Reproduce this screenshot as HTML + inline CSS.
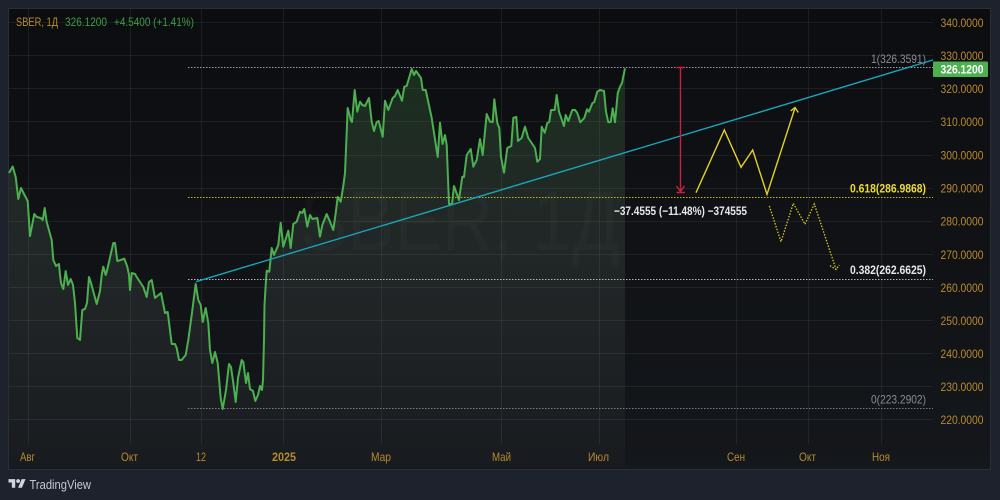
<!DOCTYPE html>
<html lang="ru"><head><meta charset="utf-8"><title>SBER</title>
<style>
html,body{margin:0;padding:0;background:#1e222d;width:1000px;height:500px;overflow:hidden}
svg{display:block;filter:blur(.3px)}
text{font-family:"Liberation Sans",sans-serif}
</style></head><body>
<svg width="1000" height="500" viewBox="0 0 1000 500" xmlns="http://www.w3.org/2000/svg">
<defs>
<linearGradient id="bg" x1="0" y1="0" x2="0" y2="1"><stop offset="0" stop-color="#0c0d10"/><stop offset="1" stop-color="#14171b"/></linearGradient>
<linearGradient id="fill" gradientUnits="userSpaceOnUse" x1="0" y1="68" x2="0" y2="468"><stop offset="0" stop-color="#4caf50" stop-opacity=".2"/><stop offset=".45" stop-color="#a8c8aa" stop-opacity=".11"/><stop offset="1" stop-color="#ffffff" stop-opacity=".015"/></linearGradient>
</defs>
<rect width="1000" height="500" fill="#1e222d"/>
<rect x="8.500" y="8.500" width="982" height="461" fill="url(#bg)" stroke="#2a2e39"/>
<text x="300" y="250" font-size="84" fill="#fff" fill-opacity=".025" textLength="320" lengthAdjust="spacingAndGlyphs">SBER, 1Д</text>
<g stroke="#fff" stroke-opacity=".065" stroke-width="1" fill="none">
<path d="M9 22.500H933M9 55.500H933M9 88.500H933M9 121.500H933M9 155.500H933M9 188.500H933M9 221.500H933M9 254.500H933M9 287.500H933M9 320.500H933M9 353.500H933M9 386.500H933M9 419.500H933"/>
<path d="M28.500 9V444M130.500 9V444M201.500 9V444M283.500 9V444M381.500 9V444M501.500 9V444M599.500 9V444M736.500 9V444M808.500 9V444M881.500 9V444"/>
</g>
<path fill="url(#fill)" d="M9 173L12.7 166.500L15.7 177L18.3 199L21 188L24 194L27.7 201L30 236L34.3 214L36.7 217L40.7 218L42.7 220L44.7 208L46.7 222L50 234L51.7 240L53.3 260L56 266L59 264L60 275L61 283L63.3 289L65.7 271L68 285L70.7 279L73 285L75 303L77.3 338L80 340L82.3 310L85 309L87 303L89 277L91 283L96.7 304L100 291L101.7 275L103.3 266.7L105.7 275L106.7 272L113.3 243L115 243L117.3 261L120.7 260L124.3 258.7L127.3 266.7L129 275L130 290L131.7 273L135 274L136.7 277L143.3 287L146.7 297L149 282L151.7 280L155 298L161 293L165 313L167.7 312L171.7 344L175 344L176.7 348L179 360L181.7 360L185.7 355L188.3 340L191.7 315L195.7 284L198.3 300L200.7 305L202.7 322L205.7 308L208.3 323L210 350L212.3 363L215 352L217.7 363L220.7 398L222.7 409L226 390L229 364L231 367L233.3 383L235.7 402L238 378L241.7 360L243.3 362L246 383L248 373L250 389L253 391L255.3 401L258 395L260 386L262 390L263 380L264 340L264.500 305L266 280L266.7 270.7L269.3 271.7L271.7 248L274 255L278.3 245L280.7 222.7L283.3 246.7L288.3 230.7L290.7 248L293.3 224L296.7 221.7L300 211.7L302.3 213L304.3 209L307.3 226.7L310 215L312.3 219L317.3 218L320 236.7L322.3 225L326.7 214L330 221.7L333.3 230L335.7 213L337.7 197L340.7 201.7L343.3 186L345 173L347.7 108L351 120.7L352 122L354.7 90L357.3 111.7L360 101.7L362.3 105L365 106L369 98L371.7 121.7L374 131L376.7 122L378.7 121L382.7 136.7L385 100.7L388.3 110L392.7 98L395 96L397.7 90L402 100.7L404.3 86.7L406.7 86L411.7 69L414 75L416 71L421 78L422.7 90L425.7 90L431.7 118L437.7 157L440 122.7L442.500 144L445 135L446.7 145L449 204L452 204L454 186L459 200L462.3 176.7L464 177L466.7 155L470.7 149L473.3 166.7L476.7 160L480 139L482.7 155L486.7 114L490 121.7L492.7 122L494.3 99.3L497.3 123L499.3 128L501 156.7L504 172.7L507.3 148L511.3 146L513.3 118L516.3 117L518 141L521.7 138L525 126.7L528.3 138L535 148L537.3 161.7L540 159L541.7 126.7L544.7 132.7L547.3 123L549.3 122L551 110L554.7 110L556.7 95L559 111.7L564 126L565.7 115L568.3 121L572.3 110L575 110L577.3 113L580.3 122.3L584.3 118L587 109.3L589 111.7L592.3 103.3L594.3 102L597.3 91.7L600 90L604 91L606 111.7L608.3 122.3L610.7 122L612.7 108.3L615 122.3L617.7 93.3L620 86.7L622 83L625 68.3V468H9Z"/>
<path fill="none" stroke="#4caf50" stroke-width="2" stroke-linejoin="round" d="M9 173L12.7 166.500L15.7 177L18.3 199L21 188L24 194L27.7 201L30 236L34.3 214L36.7 217L40.7 218L42.7 220L44.7 208L46.7 222L50 234L51.7 240L53.3 260L56 266L59 264L60 275L61 283L63.3 289L65.7 271L68 285L70.7 279L73 285L75 303L77.3 338L80 340L82.3 310L85 309L87 303L89 277L91 283L96.7 304L100 291L101.7 275L103.3 266.7L105.7 275L106.7 272L113.3 243L115 243L117.3 261L120.7 260L124.3 258.7L127.3 266.7L129 275L130 290L131.7 273L135 274L136.7 277L143.3 287L146.7 297L149 282L151.7 280L155 298L161 293L165 313L167.7 312L171.7 344L175 344L176.7 348L179 360L181.7 360L185.7 355L188.3 340L191.7 315L195.7 284L198.3 300L200.7 305L202.7 322L205.7 308L208.3 323L210 350L212.3 363L215 352L217.7 363L220.7 398L222.7 409L226 390L229 364L231 367L233.3 383L235.7 402L238 378L241.7 360L243.3 362L246 383L248 373L250 389L253 391L255.3 401L258 395L260 386L262 390L263 380L264 340L264.500 305L266 280L266.7 270.7L269.3 271.7L271.7 248L274 255L278.3 245L280.7 222.7L283.3 246.7L288.3 230.7L290.7 248L293.3 224L296.7 221.7L300 211.7L302.3 213L304.3 209L307.3 226.7L310 215L312.3 219L317.3 218L320 236.7L322.3 225L326.7 214L330 221.7L333.3 230L335.7 213L337.7 197L340.7 201.7L343.3 186L345 173L347.7 108L351 120.7L352 122L354.7 90L357.3 111.7L360 101.7L362.3 105L365 106L369 98L371.7 121.7L374 131L376.7 122L378.7 121L382.7 136.7L385 100.7L388.3 110L392.7 98L395 96L397.7 90L402 100.7L404.3 86.7L406.7 86L411.7 69L414 75L416 71L421 78L422.7 90L425.7 90L431.7 118L437.7 157L440 122.7L442.500 144L445 135L446.7 145L449 204L452 204L454 186L459 200L462.3 176.7L464 177L466.7 155L470.7 149L473.3 166.7L476.7 160L480 139L482.7 155L486.7 114L490 121.7L492.7 122L494.3 99.3L497.3 123L499.3 128L501 156.7L504 172.7L507.3 148L511.3 146L513.3 118L516.3 117L518 141L521.7 138L525 126.7L528.3 138L535 148L537.3 161.7L540 159L541.7 126.7L544.7 132.7L547.3 123L549.3 122L551 110L554.7 110L556.7 95L559 111.7L564 126L565.7 115L568.3 121L572.3 110L575 110L577.3 113L580.3 122.3L584.3 118L587 109.3L589 111.7L592.3 103.3L594.3 102L597.3 91.7L600 90L604 91L606 111.7L608.3 122.3L610.7 122L612.7 108.3L615 122.3L617.7 93.3L620 86.7L622 83L625 68.3"/>
<g fill="none" stroke-width="1" stroke-dasharray="1.500 1.500">
<path d="M188 67.500H933" stroke="#9a9da6"/>
<path d="M188 197.500H933" stroke="#c4b22a"/>
<path d="M188 279.500H933" stroke="#b2b5be"/>
<path d="M188 408.500H933" stroke="#787b84"/>
</g>
<path d="M196 281.700L933 60" fill="none" stroke="#1ba3b8" stroke-width="1.400"/>
<path d="M680.500 68V192M676.500 67.500H685M676.500 192.500H685M676.500 186L680.500 191.500L684.500 186" fill="none" stroke="#c9203f" stroke-width="1.400"/>
<path d="M696 192.700L724.300 130L741 167.300L752.700 150L767 194.300L795 108M790.700 111L795 107.500L798.300 112.500" fill="none" stroke="#e3cf2c" stroke-width="1.400"/>
<path d="M769.300 206L781 241.700L793.300 203.300L805 224.300L814.300 204L836 269.300M830 265.700L836 269.500L839.300 265" fill="none" stroke="#d8c42c" stroke-width="1.300" stroke-dasharray="1.500 1.500"/>
<g font-size="12" text-anchor="end">
<text x="926" y="63" fill="#8a8d96" textLength="55" lengthAdjust="spacingAndGlyphs">1(326.3591)</text>
<text x="926" y="192.500" fill="#f0dc30" font-weight="700" textLength="76" lengthAdjust="spacingAndGlyphs">0.618(286.9868)</text>
<text x="926" y="274" fill="#e6e7ea" font-weight="700" textLength="76" lengthAdjust="spacingAndGlyphs">0.382(262.6625)</text>
<text x="926" y="403.500" fill="#8a8d96" textLength="55" lengthAdjust="spacingAndGlyphs">0(223.2902)</text>
</g>
<text x="614" y="215" font-size="12" font-weight="700" fill="#e6e7ea" textLength="133" lengthAdjust="spacingAndGlyphs">−37.4555 (−11.48%) −374555</text>
<g font-size="12" fill="#b98a2e">
<text x="16" y="26" textLength="42" lengthAdjust="spacingAndGlyphs">SBER, 1Д</text>
<text x="65" y="26" fill="#3f9c46" textLength="42" lengthAdjust="spacingAndGlyphs">326.1200</text>
<text x="114" y="26" fill="#3f9c46" textLength="80" lengthAdjust="spacingAndGlyphs">+4.5400 (+1.41%)</text>
<text x="940.500" y="27" textLength="43" lengthAdjust="spacingAndGlyphs">340.0000</text>
<text x="940.500" y="60" textLength="43" lengthAdjust="spacingAndGlyphs">330.0000</text>
<text x="940.500" y="93" textLength="43" lengthAdjust="spacingAndGlyphs">320.0000</text>
<text x="940.500" y="126" textLength="43" lengthAdjust="spacingAndGlyphs">310.0000</text>
<text x="940.500" y="159.500" textLength="43" lengthAdjust="spacingAndGlyphs">300.0000</text>
<text x="940.500" y="192.500" textLength="43" lengthAdjust="spacingAndGlyphs">290.0000</text>
<text x="940.500" y="225.500" textLength="43" lengthAdjust="spacingAndGlyphs">280.0000</text>
<text x="940.500" y="259" textLength="43" lengthAdjust="spacingAndGlyphs">270.0000</text>
<text x="940.500" y="292" textLength="43" lengthAdjust="spacingAndGlyphs">260.0000</text>
<text x="940.500" y="325" textLength="43" lengthAdjust="spacingAndGlyphs">250.0000</text>
<text x="940.500" y="358" textLength="43" lengthAdjust="spacingAndGlyphs">240.0000</text>
<text x="940.500" y="391" textLength="43" lengthAdjust="spacingAndGlyphs">230.0000</text>
<text x="940.500" y="424" textLength="43" lengthAdjust="spacingAndGlyphs">220.0000</text>
<text x="20" y="461" textLength="15" lengthAdjust="spacingAndGlyphs">Авг</text>
<text x="121" y="461" textLength="17" lengthAdjust="spacingAndGlyphs">Окт</text>
<text x="196" y="461" textLength="10" lengthAdjust="spacingAndGlyphs">12</text>
<text x="272" y="461" font-weight="700" textLength="24" lengthAdjust="spacingAndGlyphs">2025</text>
<text x="371" y="461" textLength="20" lengthAdjust="spacingAndGlyphs">Мар</text>
<text x="492" y="461" textLength="19" lengthAdjust="spacingAndGlyphs">Май</text>
<text x="588" y="461" textLength="21" lengthAdjust="spacingAndGlyphs">Июл</text>
<text x="727" y="461" textLength="18" lengthAdjust="spacingAndGlyphs">Сен</text>
<text x="799" y="461" textLength="17" lengthAdjust="spacingAndGlyphs">Окт</text>
<text x="872" y="461" textLength="18" lengthAdjust="spacingAndGlyphs">Ноя</text>
</g>
<rect x="933" y="61.500" width="55" height="15.500" rx="1" fill="#4caf50"/>
<text x="940.500" y="73.500" font-size="12" font-weight="700" fill="#fff" textLength="43" lengthAdjust="spacingAndGlyphs">326.1200</text>
<g transform="translate(8.500 477.200) scale(.48)" fill="#d1d4dc"><path d="M14 22H7V11H0V4h14v18zM28 22h-8l7.500-18h8L28 22z"/><circle cx="20" cy="8" r="4"/></g>
<text x="29.500" y="489" font-size="12.500" fill="#c4c7cf" textLength="61.500" lengthAdjust="spacingAndGlyphs">TradingView</text>
</svg>
</body></html>
